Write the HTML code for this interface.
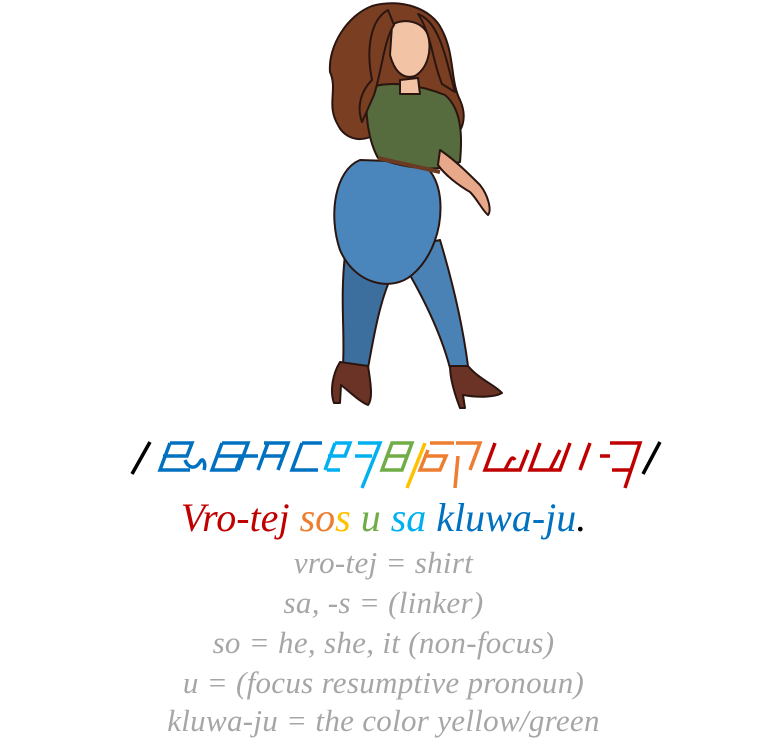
<!DOCTYPE html>
<html><head><meta charset="utf-8"><style>
html,body{margin:0;padding:0;background:#fff;width:767px;height:753px;overflow:hidden;position:relative}
.t{position:absolute;left:0;width:767px;text-align:center;font-family:"Liberation Serif",serif;font-style:italic;white-space:nowrap}
.g{color:#a6a6a6;font-size:31px;letter-spacing:0.3px}
</style></head><body>
<svg width="767" height="500" style="position:absolute;left:0;top:0">
 <g stroke="#2a1510" stroke-width="2" stroke-linejoin="round">
  <!-- hair back -->
  <path d="M372 6 C400 -2 432 8 442 30 C455 55 450 80 460 100 C468 118 462 132 452 140 L440 120 L380 130 C365 145 345 140 338 125 C326 105 338 90 330 72 C328 45 348 15 372 6Z" fill="#7a3f22"/>
  <!-- legs -->
  <path d="M345 255 C340 300 345 330 343 365 L368 368 C374 335 380 300 392 275Z" fill="#3d6f9e"/>
  <path d="M395 250 C420 290 440 330 450 368 L468 366 C462 320 452 280 440 240Z" fill="#4a82b5"/>
  <!-- hips -->
  <path d="M360 160 C335 170 328 215 340 250 C355 285 392 292 412 275 C432 258 443 228 440 198 C438 180 430 168 420 162Z" fill="#4a86bb"/>
  <!-- sweater -->
  <path d="M368 88 C390 80 420 85 445 95 C463 110 462 140 460 162 L440 168 C420 170 395 165 378 158 C368 140 364 110 368 88Z" fill="#566b3e"/>
  <!-- arm -->
  <path d="M440 150 C455 160 470 175 480 185 C488 195 492 210 488 215 C482 210 478 200 470 192 C458 185 445 175 438 165Z" fill="#e8a98a"/>
  <!-- belt -->
  <path d="M378 158 L440 172" stroke="#6b3a22" stroke-width="4" fill="none"/>
  <!-- face -->
  <path d="M392 25 C402 18 422 20 428 35 C432 50 428 68 415 76 C402 80 394 70 390 55Z" fill="#f2c3a5"/>
  <path d="M400 80 L400 94 L420 94 L418 78Z" fill="#f2c3a5"/>
  <!-- hair front -->
  <path d="M388 10 C370 20 366 50 372 80 C362 90 356 105 362 122 L374 95 C382 70 384 40 394 25Z" fill="#7a3f22"/>
  <path d="M418 14 C440 22 446 60 455 92 L442 84 C432 60 432 35 418 14Z" fill="#7a3f22"/>
  <!-- shoes -->
  <path d="M340 362 C332 375 330 392 334 403 L340 403 L341 385 C350 392 360 402 368 405 C372 400 372 390 368 366Z" fill="#6b3325"/>
  <path d="M450 366 C450 380 455 395 460 408 L465 408 L463 395 C480 398 495 397 502 393 C495 385 480 380 468 366Z" fill="#6b3325"/>
 </g>
 <!-- script line -->
 <g fill="none" stroke-width="3.5" stroke-linejoin="miter">
  <path d="M150 442 L132 474" stroke="#000"/>
  <g stroke="#0070C0">
   <path d="M170 443 L160 470 L190 470 M170 443 L192 443 L187 456 L163 456"/>
   <path d="M185 460 C188 468 195 470 200 462 C203 456 206 464 204 470"/>
   <path d="M222 443 L212 470 L236 470 L241 456 L216 456 M222 443 L248 443 L238 470 M244 456 L258 456"/>
   <path d="M268 443 L258 470 M264 443 L288 443 L278 470 M262 456 L283 456"/>
   <path d="M302 443 L292 470 L318 470 M302 443 L322 443"/>
  </g>
  <g stroke="#00B0F0">
   <path d="M335 443 L325 470 M335 443 L350 443 L345 456 L328 456 M327 470 L340 470"/>
   <path d="M358 443 L380 443 L362 488 M355 456 L372 456"/>
  </g>
  <g stroke="#70AD47">
   <path d="M392 443 L382 470 L402 470 L412 443 Z M388 456 L406 456"/>
  </g>
  <path d="M425 443 L407 488" stroke="#FFC000"/>
  <g stroke="#ED7D31">
   <path d="M430 443 L454 443 M428 450 L420 470 L440 470 L446 456 L424 456"/>
   <path d="M456 443 L480 443 L470 470 M458 456 L455 488"/>
  </g>
  <g stroke="#C00000">
   <path d="M495 443 L485 470 L520 470 L528 450 M505 470 C510 460 512 455 515 460"/>
   <path d="M540 443 L530 470 L560 470 L570 443 M550 470 L560 450"/>
   <path d="M590 443 L580 470 M600 456 L610 456"/>
   <path d="M610 443 L640 443 L625 488 M612 470 L632 470"/>
  </g>
  <path d="M660 442 L643 474" stroke="#000"/>
 </g>
</svg>
<div class="t" style="top:494px;font-size:40px;color:#C00000">Vro-tej <span style="color:#ED7D31">so</span><span style="color:#FFC000">s</span> <span style="color:#70AD47">u</span> <span style="color:#00B0F0">sa</span> <span style="color:#0070C0">kluwa-ju</span><span style="color:#000">.</span></div>
<div class="t g" style="top:545px">vro-tej = shirt</div>
<div class="t g" style="top:585px">sa, -s = (linker)</div>
<div class="t g" style="top:625px">so = he, she, it (non-focus)</div>
<div class="t g" style="top:665px">u = (focus resumptive pronoun)</div>
<div class="t g" style="top:703px">kluwa-ju = the color yellow/green</div>
</body></html>
